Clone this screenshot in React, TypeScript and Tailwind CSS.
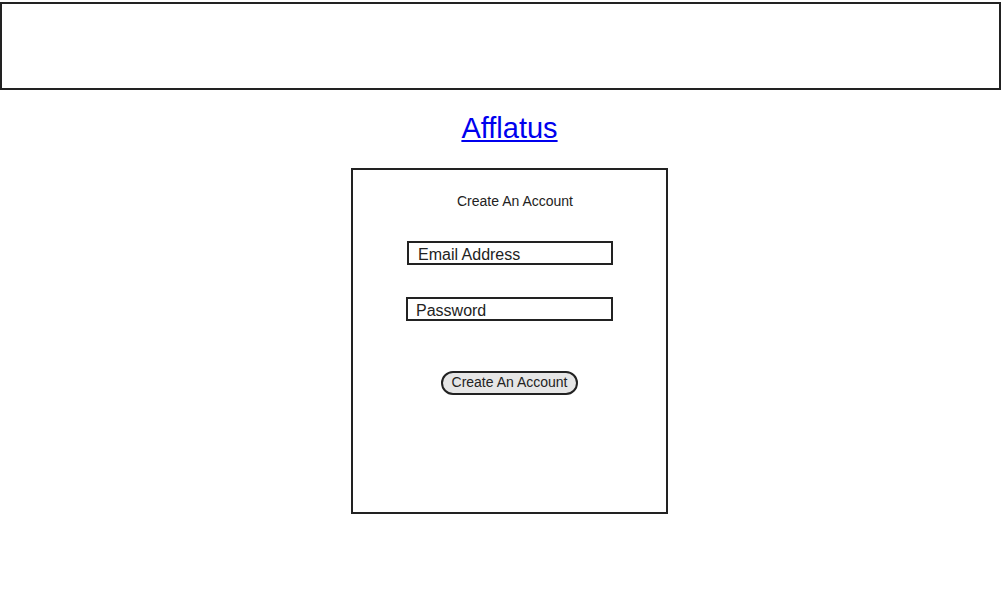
export default function App() {
  return (
    <div className="min-h-[600px] bg-white font-['Liberation_Sans',Arial,sans-serif] text-[#222]">
      <div className="mt-[2px] h-[88px] w-[1001px] border-2 border-[#222]" />

      <div className="pl-[17px]">
        <div className="mt-[21px] flex justify-center">
          <a href="#" className="text-[29px] leading-[34px] text-[#0000ee] underline">
            Afflatus
          </a>
        </div>

        <div className="mx-auto mt-[23px] flex h-[346px] w-[317px] flex-col border-2 border-[#222]">
          <p className="ml-[104px] mt-[23px] text-[14px] leading-[16px]">Create An Account</p>

          <div className="ml-[54px] mt-[32px] h-[24px] w-[206px] border-2 border-[#222] pl-[9px] pt-[3px] text-[16px] leading-[17px]">
            Email Address
          </div>

          <div className="ml-[53px] mt-[32px] h-[24px] w-[207px] border-2 border-[#222] pl-[8px] pt-[3px] text-[16px] leading-[17px]">
            Password
          </div>

          <button className="ml-[88px] mt-[50px] h-[24px] w-[137px] rounded-full border-2 border-[#222] bg-[#e6e6e6] px-2 pb-[2px] text-[14px] leading-[18px]">
            Create An Account
          </button>
        </div>
      </div>
    </div>
  )
}
